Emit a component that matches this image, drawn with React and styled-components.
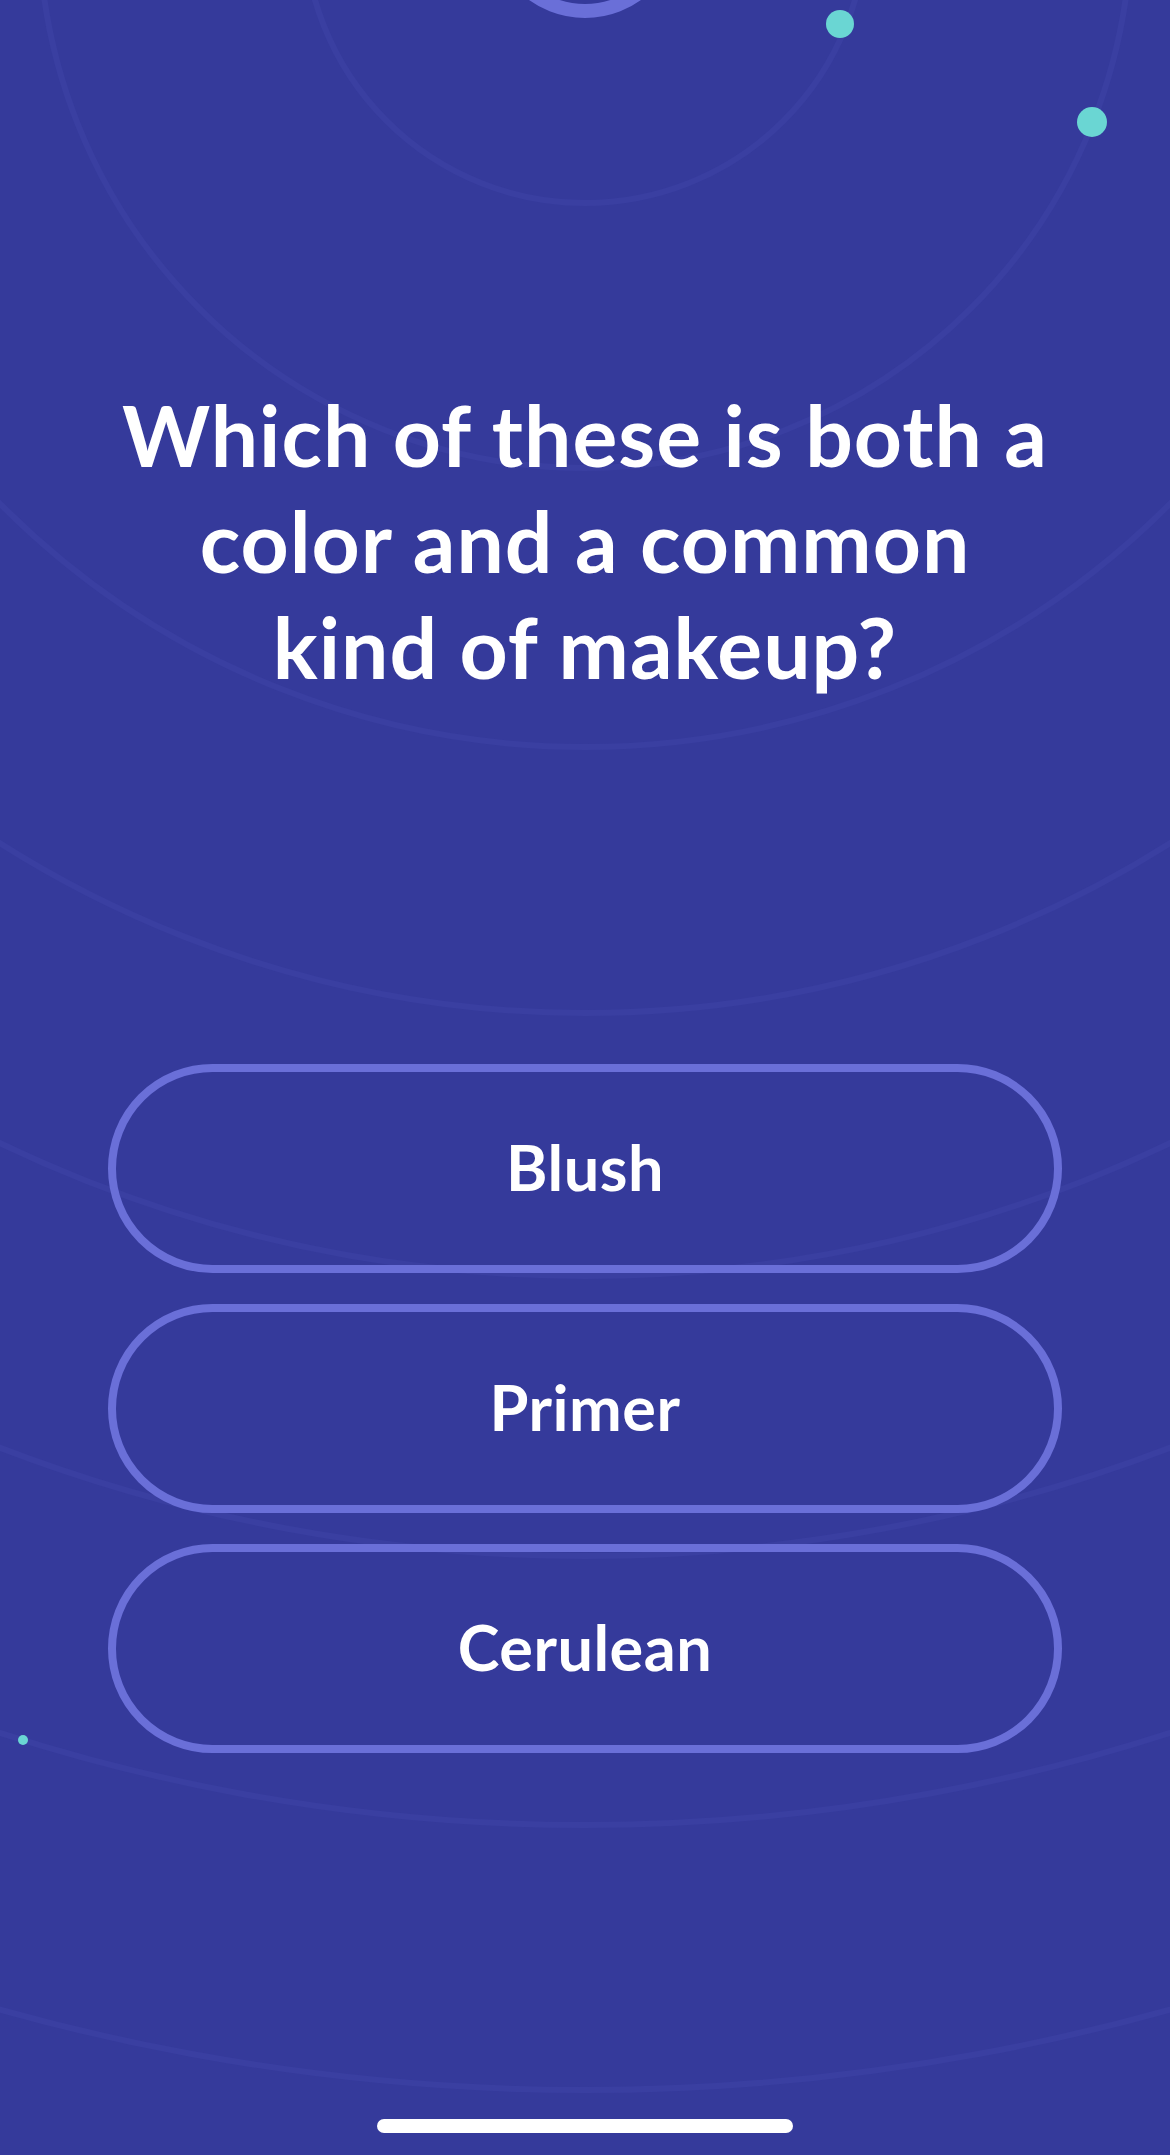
import React from 'react';
import styled, { createGlobalStyle } from 'styled-components';

const GlobalStyle = createGlobalStyle`
    html, body {
        margin: 0;
        padding: 0;
        background: #353a9b;
    }
    * {
        box-sizing: border-box;
    }
`;

const Screen = styled.div`
    position: relative;
    width: 1170px;
    height: 2155px;
    overflow: hidden;
    background: #353a9b;
    display: flex;
    flex-direction: column;
    align-items: center;
    font-family: Lato, "Noto Sans", sans-serif;
    color: #ffffff;
`;

const Backdrop = styled.svg`
    position: absolute;
    top: 0;
    left: 0;
    width: 1170px;
    height: 2155px;
    pointer-events: none;
`;

const Question = styled.h1`
    position: relative;
    margin: 382px 0 0;
    width: 936px;
    font-size: 84px;
    line-height: 106px;
    font-weight: 700;
    text-align: center;
    letter-spacing: 1px;
`;

const Options = styled.div`
    position: relative;
    margin-top: 364px;
    display: flex;
    flex-direction: column;
    gap: 31px;
`;

const Option = styled.button`
    width: 954px;
    height: 209px;
    border: 8px solid #6a6fd8;
    border-radius: 105px;
    background: transparent;
    color: #ffffff;
    font-family: Lato, "Noto Sans", sans-serif;
    font-size: 63px;
    font-weight: 700;
    letter-spacing: 0.5px;
    display: flex;
    align-items: center;
    justify-content: center;
    padding: 0 0 4px;
    cursor: pointer;
`;

const HomeBar = styled.div`
    position: relative;
    margin-top: auto;
    margin-bottom: 22px;
    width: 416px;
    height: 14px;
    border-radius: 7px;
    background: #ffffff;
`;

const rings = [281, 546, 825, 1091, 1354, 1634, 1903, 2168];

const dots = [
    { x: 840, y: 24, r: 14 },
    { x: 1092, y: 122, r: 15 },
    { x: 23, y: 1740, r: 5 },
];

const answers = ['Blush', 'Primer', 'Cerulean'];

function App() {
    return (
        <>
            <GlobalStyle />
            <Screen>
                <Backdrop viewBox="0 0 1170 2155">
                    {rings.map((r) => (
                        <circle key={r} cx="585" cy="-78" r={r} fill="none" stroke="#3a3fa1" strokeWidth="6" />
                    ))}
                    <circle cx="585" cy="-78" r="89" fill="none" stroke="#6a6fd8" strokeWidth="14" />
                    {dots.map((d) => (
                        <circle key={d.x} cx={d.x} cy={d.y} r={d.r} fill="#6ad6d3" />
                    ))}
                </Backdrop>

                <Question>Which of these is both a color and a common kind of makeup?</Question>

                <Options>
                    {answers.map((a) => (
                        <Option key={a}>{a}</Option>
                    ))}
                </Options>

                <HomeBar />
            </Screen>
        </>
    );
}

export default App;
